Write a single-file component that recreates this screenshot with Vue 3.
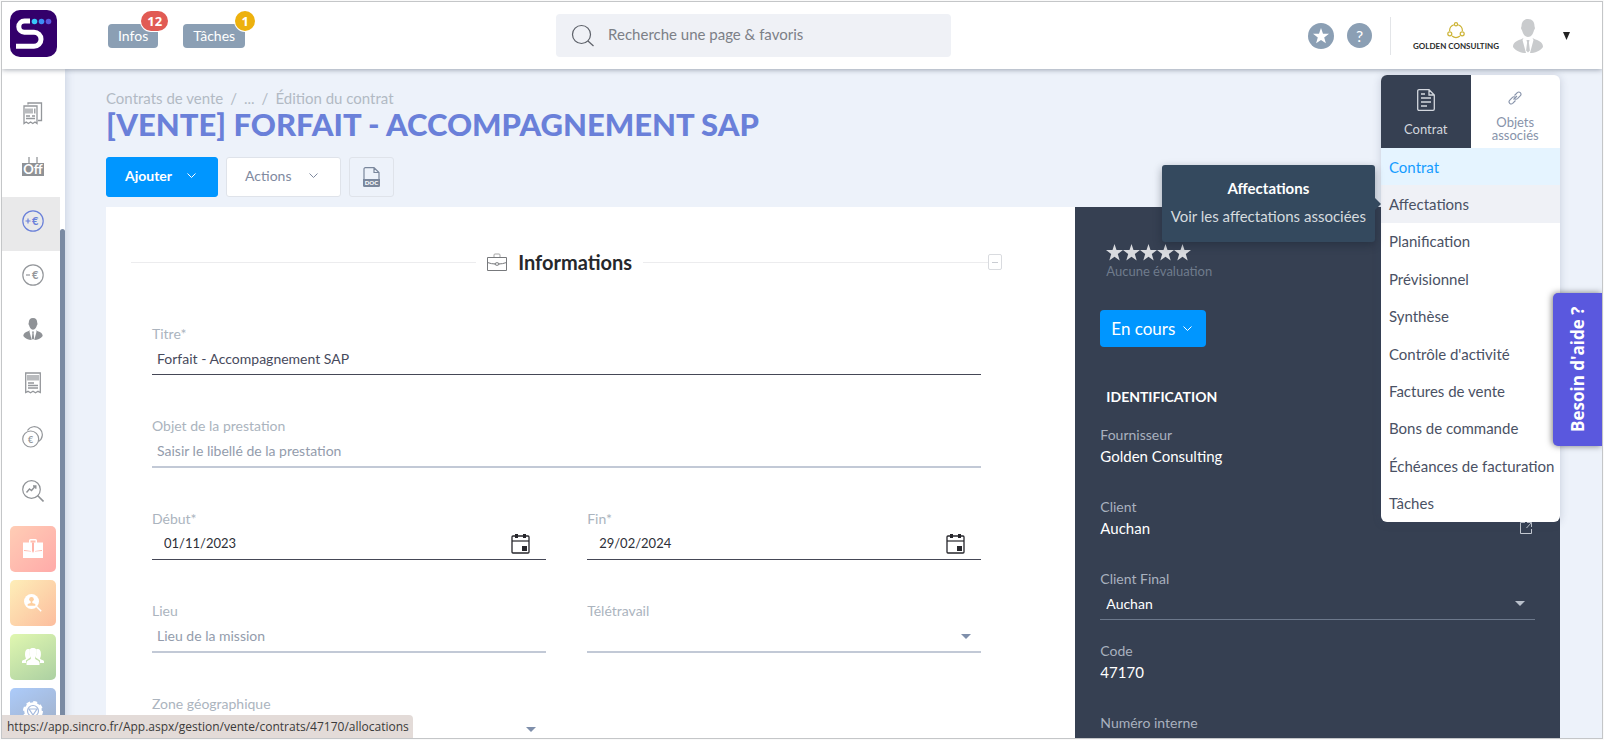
<script setup>
import { ref } from 'vue'

const menu = [
  'Contrat', 'Affectations', 'Planification', 'Prévisionnel', 'Synthèse',
  "Contrôle d'activité", 'Factures de vente', 'Bons de commande',
  'Échéances de facturation', 'Tâches',
]
const current = ref('Contrat')
const hovered = ref('Affectations')

const title = ref('Forfait - Accompagnement SAP')
const subject = ref('')
const start = ref('01/11/2023')
const end = ref('29/02/2024')
const place = ref('')
</script>

<template>
  <div class="page">
    <header class="topbar">
      <a href="#" class="brand" aria-label="Accueil">
        <svg width="47" height="47" viewBox="0 0 47 47">
          <rect width="47" height="47" rx="10" fill="#33006b" />
          <path d="M20 11H14.500a5.700 5.700 0 0 0-5.700 5.700v0a5.500 5.500 0 0 0 5.500 5.500H24a7 7 0 0 1 7 7v0a7 7 0 0 1-7 7H6" fill="none" stroke="#fff" stroke-width="5" />
          <circle cx="24.500" cy="11.500" r="2.800" fill="#38c6f8" />
          <circle cx="31.500" cy="11.500" r="2.800" fill="#3d8ef5" />
          <circle cx="38.500" cy="11.500" r="2.800" fill="#5a58de" />
        </svg>
      </a>
      <div class="notices">
        <button class="notice">Infos<span class="badge red">12</span></button>
        <button class="notice">Tâches<span class="badge amber">1</span></button>
      </div>
      <label class="search">
        <svg width="24" height="24" viewBox="0 0 24 24" fill="none" stroke="#5c6068" stroke-width="1.200">
          <circle cx="10.500" cy="10.500" r="9" /><path d="M17 17l5.500 5" />
        </svg>
        <input type="text" placeholder="Recherche une page &amp; favoris" aria-label="Recherche" />
      </label>
      <div class="account">
        <button class="round" aria-label="Favoris">
          <svg width="26" height="26" viewBox="0 0 26 26">
            <circle cx="13" cy="13" r="13" fill="#8b9fb4" />
            <path d="M13 5l2 5.700 6 .1-4.800 3.700 1.700 5.800-4.900-3.400-4.900 3.400 1.700-5.800L5 10.800l6-.1z" fill="#fff" />
          </svg>
        </button>
        <button class="round help" aria-label="Aide">?</button>
        <span class="rule"></span>
        <div class="company">
          <svg width="18" height="17" viewBox="0 0 18 17" fill="none" stroke="#cdb437" stroke-width="1.200">
            <path d="M6.800 2.800A6.500 6.500 0 0 0 2.600 9M11.200 2.800A6.500 6.500 0 0 1 15.400 9M5 14a6.500 6.500 0 0 0 8 0" />
            <circle cx="9" cy="2.300" r="1.600" /><circle cx="2.800" cy="11.800" r="2" /><circle cx="15.200" cy="11.800" r="2" />
          </svg>
          <span>GOLDEN CONSULTING</span>
        </div>
        <svg class="avatar" width="30" height="34" viewBox="0 0 30 34" fill="#c9cbcd">
          <path d="M15 0c4.500 0 6.500 3 6.500 7 0 1 .6 1.200.4 2.500-.2 1-.8 1.300-1 2-.8 3-2.400 6.500-5.900 6.500s-5.100-3.500-5.900-6.500c-.2-.7-.8-1-1-2C7.900 8.200 8.500 8 8.500 7c0-4 2-7 6.500-7z" />
          <path d="M10.500 19L7.500 20.500C3 22 0 24 0 28c3 4 8 6 13 6l-3.500-13zM19.500 19l3 1.500C27 22 30 24 30 28c-3 4-8 6-13 6l3.500-13zM13.500 21h3l-.6 2.500 1 8-1.900 2-1.900-2 1-8z" />
        </svg>
        <button class="more" aria-label="Compte">
          <svg width="7" height="8" viewBox="0 0 7 8"><path d="M0 0h7L3.500 8z" fill="#222" /></svg>
        </button>
      </div>
    </header>

    <div class="body">
      <aside class="sidebar">
        <nav class="rail">
          <a href="#" class="item" aria-label="Documents">
            <svg width="20" height="23" viewBox="0 0 20 23" fill="none" stroke="#94979b" stroke-width="1.300">
              <path d="M5 2.500V1h13.500v17.500H15M1 21.500V4h13v17.500l-2-1.500-2.200 1.500-2.200-1.500-2.200 1.500-2.200-1.500z" />
              <path d="M3 6.500v5M5 6.500v5M7 6.500v5M9 6.500v5M11.800 6.500v5" /><path d="M3 14h4M3 16.500h9M9 14h3" />
            </svg>
          </a>
          <a href="#" class="item" aria-label="Absences">
            <svg width="22" height="20" viewBox="0 0 22 20">
              <path d="M7 0v7M15 0v7" stroke="#94979b" stroke-width="1.300" /><rect y="6" width="22" height="13" fill="#8f9296" />
              <text x="11" y="16.500" text-anchor="middle" font-size="13" font-weight="700" fill="#fff">Off</text>
            </svg>
          </a>
          <a href="#" class="item active" aria-label="Ventes">
            <svg width="22" height="22" viewBox="0 0 22 22"><circle cx="11" cy="11" r="10.200" fill="none" stroke="#6a80d9" stroke-width="1.200" />
              <path d="M3.500 11h5M6 8.500v5" stroke="#6a80d9" stroke-width="1.200" /><text x="13.200" y="15" text-anchor="middle" font-size="11" font-weight="700" fill="#6a80d9">€</text></svg>
          </a>
          <a href="#" class="item" aria-label="Achats">
            <svg width="22" height="22" viewBox="0 0 22 22"><circle cx="11" cy="11" r="10.200" fill="none" stroke="#94979b" stroke-width="1.200" />
              <path d="M4 11h4" stroke="#94979b" stroke-width="1.200" /><text x="13.200" y="15" text-anchor="middle" font-size="11" font-weight="700" fill="#94979b">€</text></svg>
          </a>
          <a href="#" class="item" aria-label="Collaborateurs">
            <svg width="20" height="22" viewBox="0 0 30 34" fill="#8f9296">
              <path d="M15 0c4.500 0 6.500 3 6.500 7 0 1 .6 1.200.4 2.500-.2 1-.8 1.300-1 2-.8 3-2.400 6.500-5.900 6.500s-5.100-3.500-5.900-6.500c-.2-.7-.8-1-1-2C7.900 8.200 8.500 8 8.500 7c0-4 2-7 6.500-7z" />
              <path d="M10.500 19L7.500 20.500C3 22 0 24 0 28c3 4 8 6 13 6l-3.500-13zM19.500 19l3 1.500C27 22 30 24 30 28c-3 4-8 6-13 6l3.500-13zM13.500 21h3l-.6 2.500 1 8-1.900 2-1.900-2 1-8z" />
            </svg>
          </a>
          <a href="#" class="item" aria-label="Factures">
            <svg width="16" height="22" viewBox="0 0 16 22" fill="none" stroke="#94979b" stroke-width="1.300">
              <path d="M.7 20.500V1h14.600v19.500L13 19.300l-2.500 1.400L8 19.300l-2.500 1.400L3 19.300z" />
              <path d="M3 3v5.500M5 3v5.500M7 3v5.500M9 3v5.500M11 3v5.500M13 3v5.500M3 11h6M3 13.500h10M3 16h10" />
            </svg>
          </a>
          <a href="#" class="item" aria-label="Frais">
            <svg width="22" height="22" viewBox="0 0 22 22" fill="none" stroke="#94979b" stroke-width="1.200">
              <circle cx="8.700" cy="13" r="8" /><path d="M5.500 4.500a8 8 0 1 1 11 11" />
              <text x="8.700" y="16.500" text-anchor="middle" font-size="9" font-weight="700" fill="#94979b" stroke="none">€</text>
            </svg>
          </a>
          <a href="#" class="item" aria-label="Analyses">
            <svg width="22" height="22" viewBox="0 0 22 22" fill="none" stroke="#8f9296" stroke-width="1.200">
              <circle cx="9.500" cy="9.500" r="8.800" /><path d="M15.500 15.500l6 6" stroke-width="1.600" />
              <path d="M4.500 12.500l3-3.500 2 1.500 3.500-4M11 6h2.800v2.800" stroke-width="1.400" />
            </svg>
          </a>
          <a href="#" class="tile coral" aria-label="Missions">
            <svg width="20" height="20" viewBox="0 0 20 20" fill="#fff">
              <path d="M6 4V1.500A1.500 1.500 0 0 1 7.500 0h5A1.500 1.500 0 0 1 14 1.500V4h-1.500V1.500h-5V4z" /><path d="M0 3.500h20V19H0z" />
              <path d="M9 3.500h2v8.500l-1 2-1-2zM1 11l7 1v.6L1 12zM19 11l-7 1v.6l7-.6z" fill="#ffb3a8" />
            </svg>
          </a>
          <a href="#" class="tile peach" aria-label="Recrutement">
            <svg width="18" height="18" viewBox="0 0 18 18">
              <circle cx="7.500" cy="7.500" r="7.500" fill="#fff" /><path d="M12.500 12.500l4.700 4.700" stroke="#fff" stroke-width="1.500" />
              <circle cx="7.500" cy="5.300" r="2.300" fill="#fecf9f" /><path d="M6.700 7h1.600v2l3 1v1.800H3.700V10l3-1z" fill="#fecf9f" />
            </svg>
          </a>
          <a href="#" class="tile green" aria-label="Équipes">
            <svg width="22" height="18" viewBox="0 0 22 18" fill="#fff">
              <path d="M6 1c1.500 0 2 .6 2 .6-1 2-.6 4-.2 5.400.4 2 .7 2.600-.3 3L4 12.500V15H0v-1.500C0 12 3 12 4 10.500 2.500 8 2.500 1 6 1zM16 1c-1.500 0-2 .6-2 .6 1 2 .6 4 .2 5.400-.4 2-.7 2.600.3 3l3.500 2.500V15h4v-1.500c0-1.500-3-1.500-4-3C19.500 8 19.500 1 16 1z" />
              <path d="M11 0c3 0 4 2 3.800 4.500-.2 2.500-1 4.500-1.800 5.500 0 2 4 2 4.500 4.500V17h-13v-2.500C5 12 9 12 9 10 8.200 9 7.400 7 7.200 4.500 7 2 8 0 11 0z" />
            </svg>
          </a>
          <a href="#" class="tile blue" aria-label="Paramètres">
            <svg width="20" height="20" viewBox="0 0 20 20">
              <circle cx="10" cy="10" r="8.800" fill="#fff" /><circle cx="10" cy="10" r="8.700" fill="none" stroke="#fff" stroke-width="2.600" stroke-dasharray="3.800 3.030" />
              <circle cx="10" cy="10" r="5.500" fill="none" stroke="#a4b9dd" stroke-width="1.200" /><path d="M6 8h8l-4 6z" fill="none" stroke="#a4b9dd" stroke-width="1.200" />
            </svg>
          </a>
        </nav>
        <div class="track"><div class="thumb"></div></div>
      </aside>

      <main class="main">
        <nav class="crumbs" aria-label="Fil d'Ariane">
          <a href="#">Contrats de vente</a><span>/</span><a href="#">...</a><span>/</span><a href="#">Édition du contrat</a>
        </nav>
        <h1>[VENTE] FORFAIT - ACCOMPAGNEMENT SAP</h1>
        <div class="actions">
          <button class="btn primary">Ajouter
            <svg width="9" height="6" viewBox="0 0 9 6" fill="none" stroke="currentColor"><path d="M.5.500l4 4 4-4" /></svg>
          </button>
          <button class="btn">Actions
            <svg width="9" height="6" viewBox="0 0 9 6" fill="none" stroke="currentColor"><path d="M.5.500l4 4 4-4" /></svg>
          </button>
          <button class="btn doc" aria-label="Exporter en DOC">
            <svg width="17" height="20" viewBox="0 0 17 20">
              <path d="M1 12V2a1.300 1.300 0 0 1 1.300-1.300H11L16 5.500V12M11 .700V5.500h5" fill="none" stroke="#7a879c" stroke-width="1.200" />
              <path d="M0 12h17v6.500a1.500 1.500 0 0 1-1.500 1.500h-14A1.500 1.500 0 0 1 0 18.500z" fill="#7a879c" />
              <text x="8.500" y="18" text-anchor="middle" font-size="6" font-weight="900" fill="#fff">DOC</text>
            </svg>
          </button>
        </div>

        <div class="sheet">
          <section class="form">
            <div class="heading">
              <span class="line"></span>
              <svg width="20" height="18" viewBox="0 0 20 18" fill="none" stroke="#77797c">
                <path d="M.5 4.500h19v13H.5z" /><path d="M7 4V2q0-1 1-1h4q1 0 1 1v2" stroke="#a5a5a5" /><path d="M.5 9.500q4 1.500 8 1.500M19.500 9.500q-4 1.500-8 1.500" /><ellipse cx="10" cy="11" rx="2" ry="1.300" />
              </svg>
              <h2>Informations</h2>
              <span class="line end"></span>
              <button class="fold" aria-label="Réduire"></button>
            </div>
            <div class="fields">
              <div class="field wide">
                <label for="titre">Titre*</label>
                <input id="titre" v-model="title" type="text" class="filled" />
              </div>
              <div class="field wide">
                <label for="objet">Objet de la prestation</label>
                <input id="objet" v-model="subject" type="text" placeholder="Saisir le libellé de la prestation" />
              </div>
              <div class="field date">
                <label for="debut">Début*</label>
                <input id="debut" v-model="start" type="text" class="filled" />
                <button class="pick" aria-label="Choisir la date de début">
                  <svg width="20" height="20" viewBox="0 0 20 20"><rect x="1" y="2" width="17" height="17" rx="1" fill="none" stroke="#26262b" stroke-width="1.300" /><path d="M1 7h17" stroke="#26262b" stroke-width="1.200" /><path d="M4 0h3v4H4zM12 0h3v4h-3zM11 12h5v5h-5z" fill="#26262b" /></svg>
                </button>
              </div>
              <div class="field date">
                <label for="fin">Fin*</label>
                <input id="fin" v-model="end" type="text" class="filled" />
                <button class="pick" aria-label="Choisir la date de fin">
                  <svg width="20" height="20" viewBox="0 0 20 20"><rect x="1" y="2" width="17" height="17" rx="1" fill="none" stroke="#26262b" stroke-width="1.300" /><path d="M1 7h17" stroke="#26262b" stroke-width="1.200" /><path d="M4 0h3v4H4zM12 0h3v4h-3zM11 12h5v5h-5z" fill="#26262b" /></svg>
                </button>
              </div>
              <div class="field">
                <label for="lieu">Lieu</label>
                <input id="lieu" v-model="place" type="text" placeholder="Lieu de la mission" />
              </div>
              <div class="field drop">
                <label for="tele">Télétravail</label>
                <select id="tele"><option></option></select>
              </div>
              <div class="field drop">
                <label for="zone">Zone géographique</label>
                <select id="zone"><option></option></select>
              </div>
            </div>
          </section>

          <aside class="panel">
            <div class="rating">
              <div class="stars">
                <svg v-for="n in 5" :key="n" width="17" height="17" viewBox="0 0 17 17"><path d="M8.500 0l2 6 6.500.1-5.200 4 1.900 6.500-5.200-3.900-5.200 3.900 1.900-6.500L0 6.100 6.500 6z" fill="#d9dbdf" /></svg>
              </div>
              <span>Aucune évaluation</span>
            </div>
            <button class="status">En cours
              <svg width="9" height="6" viewBox="0 0 9 6" fill="none" stroke="currentColor"><path d="M.5.500l4 4 4-4" /></svg>
            </button>
            <h3>IDENTIFICATION</h3>
            <dl class="facts">
              <div><dt>Fournisseur</dt><dd>Golden Consulting</dd></div>
              <div><dt>Client</dt>
                <dd>Auchan
                  <a href="#" aria-label="Ouvrir la fiche client">
                    <svg width="14" height="14" viewBox="0 0 14 14" fill="none" stroke="#c3c8d0"><path d="M6 1.500H1.500v11h11V8M8 1.500h4.500V6M12.500 1.500L7.500 7" /></svg>
                  </a>
                </dd>
              </div>
              <div class="drop">
                <dt><label for="final">Client Final</label></dt>
                <dd class="choice"><select id="final"><option>Auchan</option></select></dd>
              </div>
              <div><dt>Code</dt><dd>47170</dd></div>
              <div><dt>Numéro interne</dt><dd></dd></div>
            </dl>
          </aside>
        </div>

        <div class="flyout">
          <div class="tabs">
            <button class="tab on">
              <svg width="18" height="22" viewBox="0 0 18 22" fill="none" stroke="currentColor" stroke-width="1.300">
                <path d="M2 .700h10L17.300 6v14a1.300 1.300 0 0 1-1.300 1.300H2A1.300 1.300 0 0 1 .700 20V2A1.300 1.300 0 0 1 2 .700zM12 .700V6h5.300M4 5h4M4 9h10M4 13h10M4 17h6" />
              </svg>
              <span>Contrat</span>
            </button>
            <button class="tab">
              <svg width="14" height="14" viewBox="0 0 14 14" fill="none" stroke="currentColor" stroke-width="1.100">
                <path d="M5.500 8.500L9 5M6.500 4.500l2.800-2.900a2.200 2.200 0 0 1 3.100 3.100L9.500 7.600a2.200 2.200 0 0 1-2.600.3M7.500 9.500l-2.800 2.900a2.200 2.200 0 0 1-3.100-3.100l2.900-2.900a2.200 2.200 0 0 1 2.600-.3" />
              </svg>
              <span>Objets associés</span>
            </button>
          </div>
          <nav class="menu">
            <a v-for="entry in menu" :key="entry" href="#"
               :class="{ current: entry === current, hovered: entry === hovered }"
               @click.prevent="current = entry" @mouseenter="hovered = entry">{{ entry }}</a>
          </nav>
          <div class="tip" role="tooltip">
            <strong>Affectations</strong>
            <span>Voir les affectations associées</span>
          </div>
        </div>
      </main>
    </div>

    <button class="helpdesk">Besoin d'aide ?</button>
    <div class="statusbar">https://app.sincro.fr/App.aspx/gestion/vente/contrats/47170/allocations</div>
  </div>
</template>

<style>
body { margin: 0; background: #fafafa; }
</style>

<style scoped>
* { box-sizing: border-box; }
.page {
  position: relative;
  display: flex;
  flex-direction: column;
  height: calc(100vh - 2px);
  margin: 1px;
  border: 1px solid #c4c6c8;
  overflow: hidden;
  background: #edf2fa;
  color: #4a5164;
  font: 15px/20px Lato, sans-serif;
}
button, input, select { margin: 0; padding: 0; border: 0; background: none; color: inherit; font: inherit; border-radius: 0; }
a { color: inherit; text-decoration: none; }
svg { display: block; flex: none; }
h1, h2, h3, dl, dd { margin: 0; }

.topbar {
  position: relative;
  z-index: 3;
  flex: none;
  display: grid;
  grid-template-columns: 15fr 395px 17fr;
  align-items: center;
  height: 67px;
  padding: 0 32px 0 8px;
  background: #fff;
  box-shadow: 0 1px 5px rgba(60, 70, 90, .45);
}
.brand { grid-area: 1 / 1; justify-self: start; }
.brand svg { margin-bottom: 4px; }
.notices { grid-area: 1 / 1; justify-self: start; display: flex; gap: 25px; margin-left: 98px; }
.notice { position: relative; height: 24px; margin-top: 1px; padding: 0 10px; border-radius: 4px; background: #8b9fb4; color: #fff; font-size: 14px; line-height: 22px; }
.badge {
  position: absolute;
  top: -13px;
  right: -10px;
  min-width: 20px;
  height: 20px;
  padding: 0 6px;
  border-radius: 10px;
  font: 700 13px/20px "Open Sans", sans-serif;
  box-shadow: 0 0 0 1px #fff;
}
.red { background: #e15b54; }
.amber { background: #edb10d; }
.search { grid-area: 1 / 2; display: flex; align-items: center; gap: 13px; height: 43px; padding-left: 15px; border-radius: 4px; background: #eff1f6; }
.search input { flex: 1; padding-bottom: 4px; outline: 0; }
.search input::placeholder { color: #7c8087; opacity: 1; }
.account { grid-area: 1 / 3; display: flex; align-items: center; justify-content: flex-end; }
.round { width: 26px; height: 26px; border-radius: 50%; }
.help { width: 25px; height: 25px; margin-left: 13px; background: #8b9fb4; color: #fff; font-size: 16px; }
.rule { width: 1px; height: 38px; margin: 0 22px 0 18px; background: #e3e5e8; }
.company { display: flex; flex-direction: column; align-items: center; gap: 2px; padding-top: 3px; color: #2b2b2b; font: 700 8px/11px Lato, sans-serif; }
.avatar { margin-left: 14px; }
.more { margin-left: 20px; }

.body { flex: 1; display: flex; min-height: 0; }
.sidebar { position: relative; z-index: 2; flex: none; display: flex; width: 63px; background: #fff; box-shadow: 1px 0 8px rgba(90, 110, 150, .25); clip-path: inset(0 -10px 0 0); }
.rail { width: 58px; padding-top: 20px; }
.item { display: flex; align-items: center; justify-content: center; height: 54px; padding: 0 0 6px 3px; }
.active { background: #e9e9ea; }
.tile { display: flex; align-items: center; justify-content: center; width: 46px; height: 46px; margin: 5px 0 8px 8px; border-radius: 5px; }
.coral { background: linear-gradient(135deg, #ffcdb5, #ffaaa9); }
.peach { background: linear-gradient(135deg, #feeeb8, #fcbd9e); }
.green { background: linear-gradient(150deg, #e0f7b0, #acd0a2); }
.blue { background: linear-gradient(150deg, #accbfa, #a0aec4); }
.track { flex: 1; display: flex; padding-top: 160px; }
.thumb { flex: 1; border-radius: 3px 3px 0 0; background: #7a8aa3; }

.main { position: relative; flex: 1; min-width: 0; display: flex; flex-direction: column; padding: 20px 42px 0 41px; }
.crumbs { display: flex; gap: 7px; height: 18px; line-height: 18px; color: #b2bac4; }
h1 { color: #6a80d9; font-size: 31px; font-weight: 900; line-height: 34px; white-space: nowrap; }
.actions { display: flex; gap: 8px; margin: 16px 0 10px; }
.btn { display: flex; align-items: center; gap: 18px; height: 40px; padding: 0 22px 2px 18px; border: 1px solid #dfe3ea; border-radius: 3px; background: #fff; color: #7f8a9f; font-size: 14px; }
.primary { gap: 15px; padding-right: 21px; border-color: #0096ff; background: #0096ff; color: #fff; font-weight: 700; }
.doc { padding: 0 13px; background: none; }

.sheet { flex: 1; display: grid; grid-template-columns: 2fr 1fr; min-height: 0; background: #fff; }
.form { padding: 43px 73px 0 25px; min-width: 0; }
.heading { display: flex; align-items: center; height: 24px; }
.heading svg { margin: 0 11px; }
h2 { color: #26282c; font-size: 20px; line-height: 24px; }
.line { flex: 1; height: 1px; background: #ececee; }
.end { margin-left: 11px; }
.fold { display: grid; place-items: center; width: 14px; height: 16px; border: 1px solid #d9dbdf; border-radius: 2px; }
.fold::after { content: ""; width: 6px; height: 1px; background: #c9ccd2; }
.fields { display: grid; grid-template-columns: 1fr 1fr; gap: 41px; margin: 50px 21px 0; align-items: start; }
.field { position: relative; display: flex; flex-direction: column; min-width: 0; color: #abb4be; font-size: 14px; }
.wide { grid-column: 1 / -1; }
.field input, .field select { width: 100%; height: 32px; padding: 0 5px 2px; border-bottom: 2px solid #c2c9d6; color: #474a5c; outline: 0; font-size: 14px; }
.field input::placeholder { color: #939cac; opacity: 1; }
.field .filled { height: 31px; border-bottom: 1px solid #454756; }
.field.date input { padding-left: 12px; color: #2d2f38; font-size: 13px; }
.pick { position: absolute; right: 15px; bottom: 6px; }
select { appearance: none; }
.drop { position: relative; }
.drop::after { content: ""; position: absolute; right: 10px; bottom: 14px; border: 5px solid transparent; border-top-color: #7f8fab; border-bottom: 0; }

.panel { padding: 37px 25px 0; background: #364052; color: #fff; min-width: 0; }
.rating { padding-left: 6px; color: #6f7b8c; font-size: 13px; }
.stars { display: flex; }
.status { display: flex; align-items: center; gap: 8px; height: 37px; margin: 29px 0 40px; padding: 0 14px 0 11px; border-radius: 4px; background: #0096ff; font-size: 17px; }
h3 { padding-left: 6px; font-size: 14px; line-height: 20px; }
.facts { margin-top: 18px; }
.facts > div { height: 72px; }
.facts dt { color: #a9b1bf; font-size: 14px; }
.facts dd { display: flex; justify-content: space-between; align-items: center; padding-right: 2px; line-height: 22px; }
.facts .choice { padding: 0; }
.choice select { width: 100%; height: 31px; padding: 0 6px; border-bottom: 1px solid #6c788b; font-size: 14px; }
.facts .drop::after { border-top-color: #b9c0cb; bottom: 35px; }

.flyout { position: absolute; top: 6px; right: 42px; width: 179px; border-radius: 6px; background: #fff; box-shadow: 0 1px 8px rgba(60, 70, 100, .22); }
.tabs { display: grid; grid-template-columns: 1fr 1fr; height: 73px; }
.tab { display: flex; flex-direction: column; align-items: center; justify-content: flex-end; gap: 11px; padding: 0 16px 6px; color: #8793aa; font-size: 13px; line-height: 13px; }
.on { gap: 12px; padding-bottom: 12px; border-radius: 6px 0 0 0; background: #364052; color: #d3d7de; }
.menu { display: grid; grid-template-columns: 100%; grid-auto-rows: 1fr; min-height: 374px; }
.menu a { display: flex; align-items: center; padding: 0 8px; white-space: nowrap; }
.menu .hovered { background: #eff1f6; }
.menu .current { background: #e5f4ff; color: #149cff; }
.tip { position: absolute; top: 90px; right: 185px; display: flex; flex-direction: column; align-items: center; gap: 8px; height: 77px; padding: 13px 9px 0; border-radius: 3px; background: #34495e; color: #d6dbdf; white-space: nowrap; box-shadow: 0 3px 8px rgba(20, 30, 45, .4); }
.tip strong { color: #fff; }
.tip::after { content: ""; position: absolute; left: 100%; top: 33px; border: 6px solid transparent; border-left-color: #34495e; border-right: 0; }

.helpdesk { position: absolute; z-index: 4; top: 291px; right: 0; width: 49px; height: 153px; border-radius: 0 5px 5px 0; background: #5a58de; color: #fff; font: 700 17px/49px "Open Sans", sans-serif; writing-mode: vertical-rl; transform: rotate(180deg); box-shadow: 1px 0 6px rgba(0, 0, 0, .5); }
.statusbar { position: absolute; z-index: 4; left: 0; bottom: 0; padding: 0 4px 0 5px; border-radius: 0 4px 0 0; background: #e3dbd8; color: #3a3a3a; font: 12px/23px "Open Sans", sans-serif; white-space: nowrap; }
</style>
